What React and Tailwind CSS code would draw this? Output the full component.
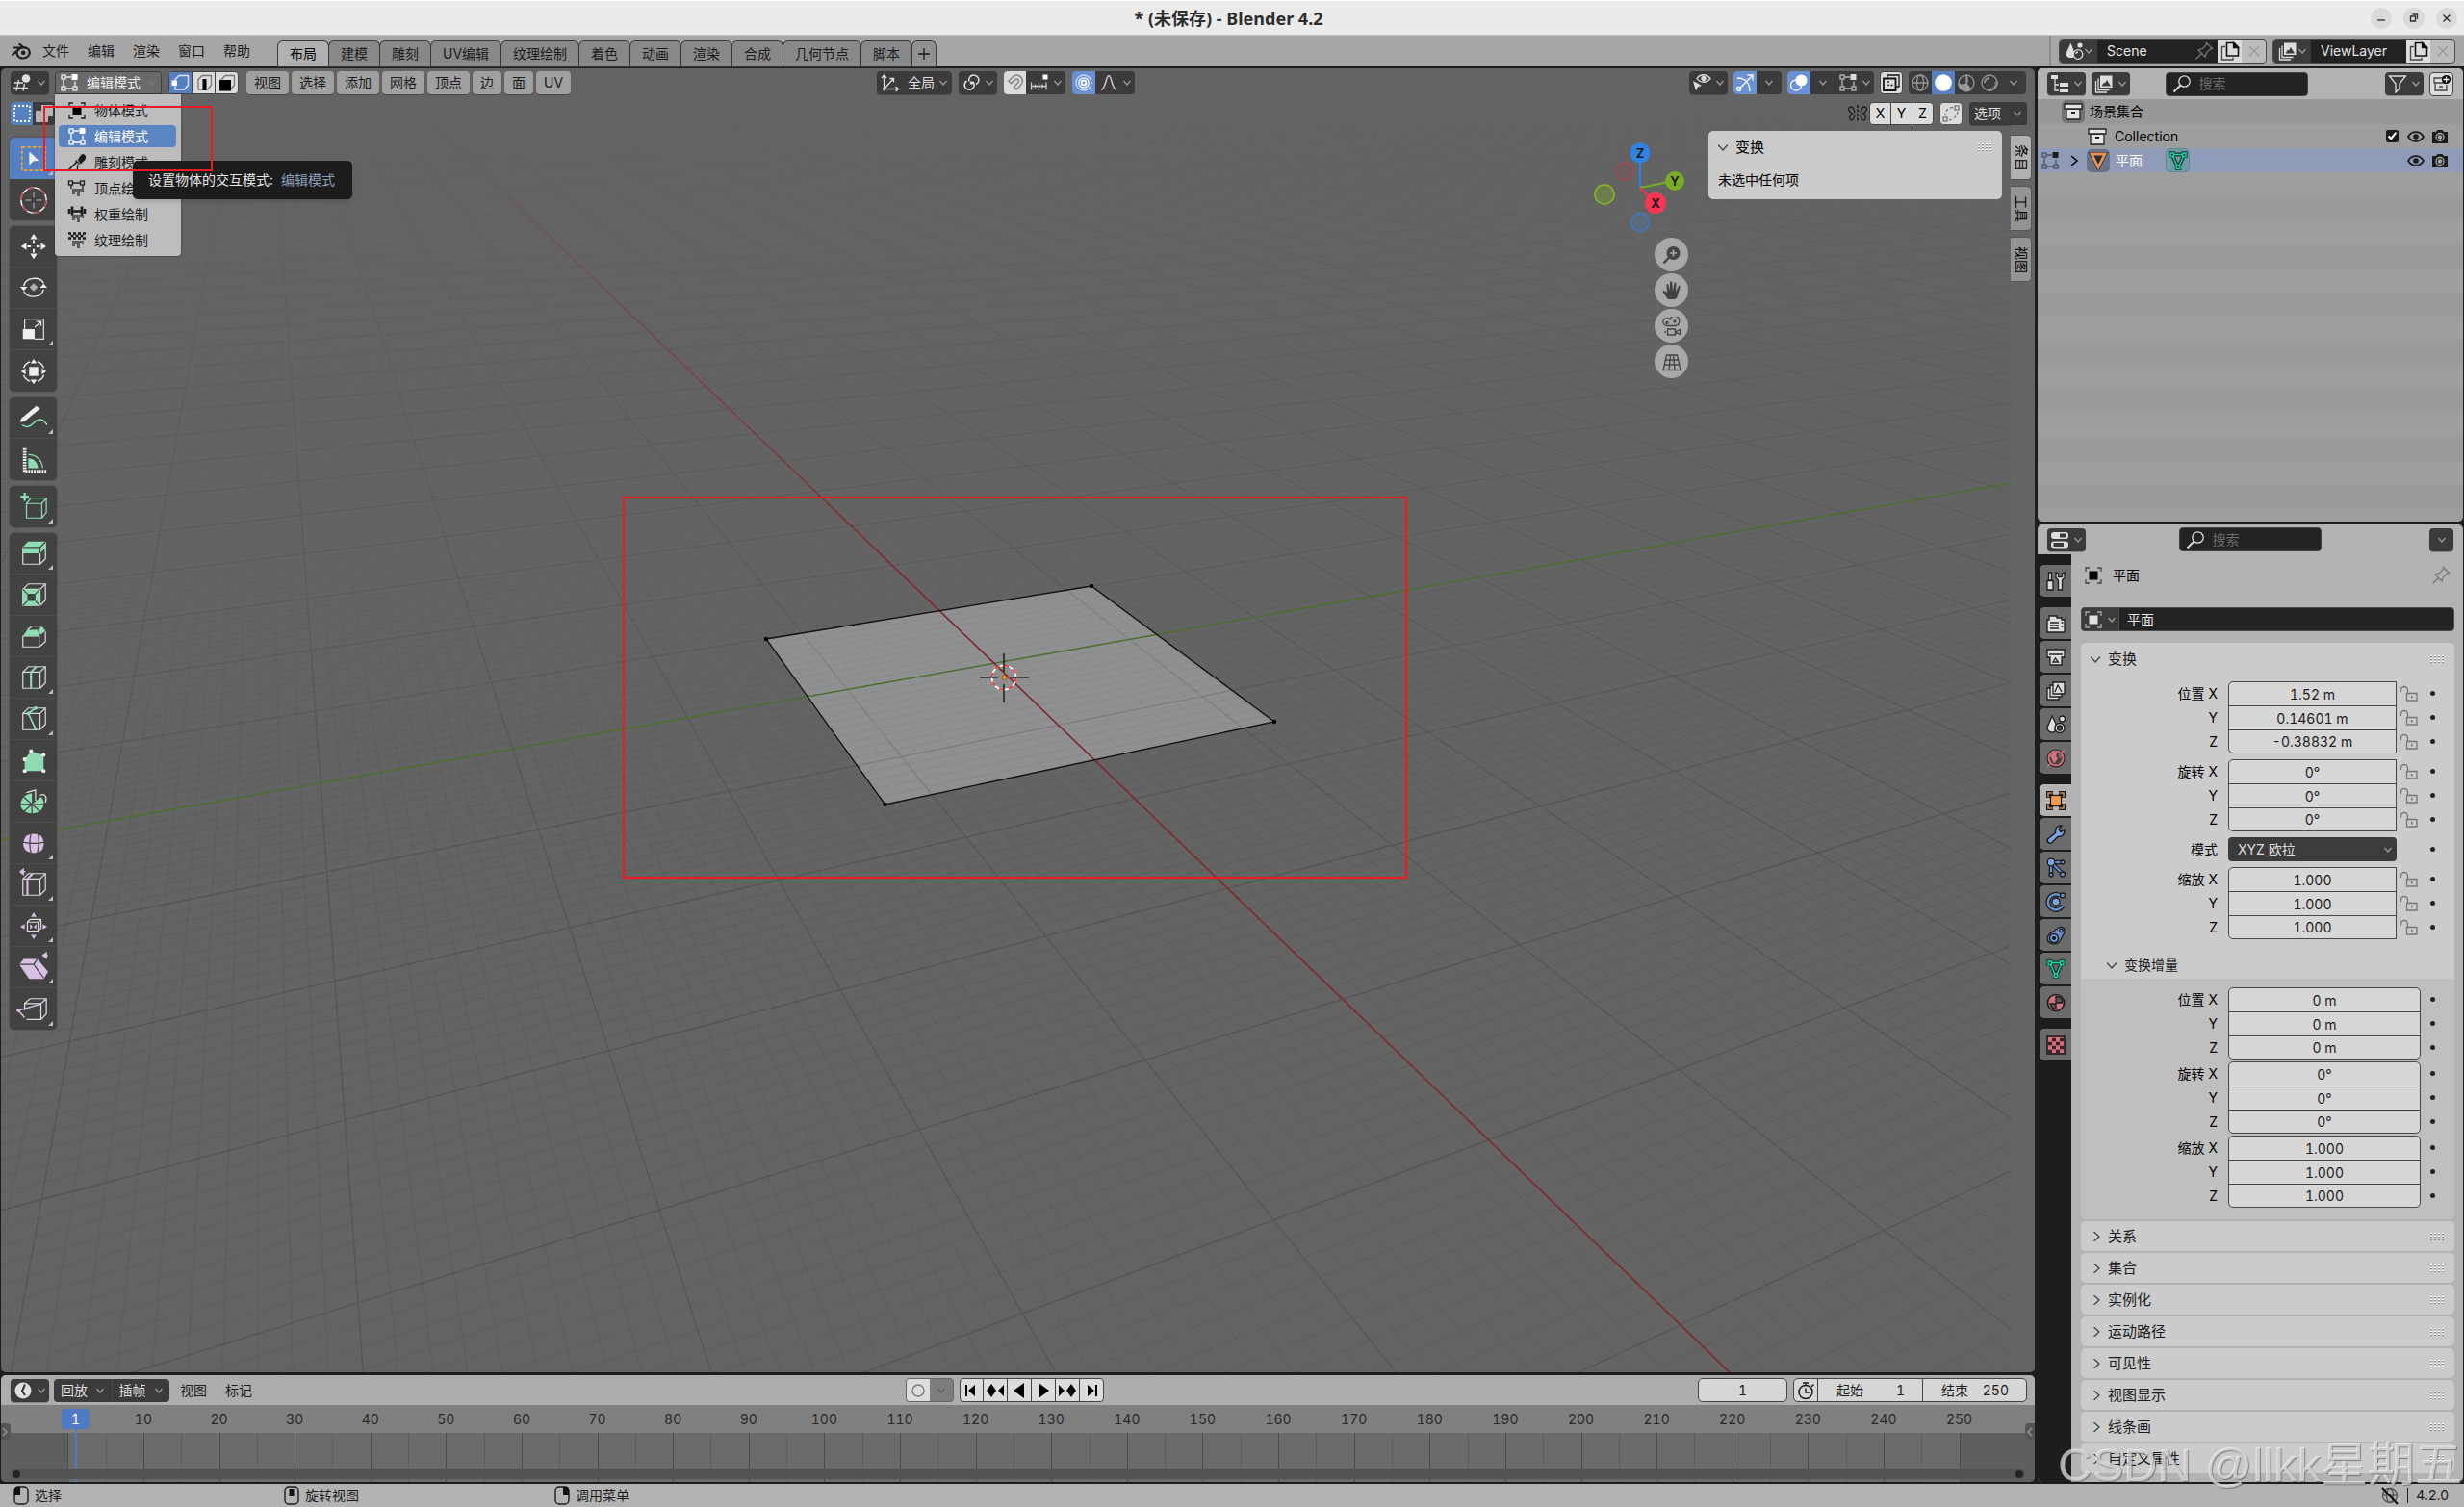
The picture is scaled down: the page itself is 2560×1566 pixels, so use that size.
import { useState } from 'react';

/* ---------- small shared pieces ---------- */

const Svg = ({ size = 'size-5', box = '0 0 20 20', className = '', children }) => (
  <svg viewBox={box} className={`${size} shrink-0 ${className}`} fill="none" stroke="currentColor" strokeWidth="1.3" aria-hidden="true">
    {children}
  </svg>
);

const Chevron = ({ className = 'text-[#9a9a9a]' }) => (
  <Svg size="size-2.5" box="0 0 10 10" className={className}>
    <path d="M1.5 3 5 7l3.5-4" />
  </Svg>
);

const Dark = ({ className = '', label, children }) => (
  <button type="button" aria-label={label} className={`flex h-6 items-center justify-center gap-1 rounded bg-[#3b3b3b] text-[#dedede] shadow-[0_1px_1px_rgba(0,0,0,0.25)] ${className}`}>
    {children}
  </button>
);

const Grip = () => (
  <svg viewBox="0 0 16 8" className="h-2 w-4 shrink-0" shapeRendering="crispEdges" aria-hidden="true">
    {[0, 4, 8, 12].map((x) => [0, 3, 6].map((y) => (
      <g key={`${x}-${y}`}>
        <rect x={x + 1} y={y} width="2" height="1" fill="#fff" />
        <rect x={x + 1} y={y + 1} width="2" height="1" fill="#8f8f8f" />
      </g>
    )))}
  </svg>
);

/* ---------- icons ---------- */

const EditModeIcon = ({ className, dot = '#fff' }) => (
  <Svg className={className}>
    <path d="M6.5 4H12M4 6.5v7M6.5 16h7M16 8.5v5" />
    <rect x="2" y="2" width="4" height="4" />
    <rect x="2" y="14" width="4" height="4" />
    <rect x="14" y="14" width="4" height="4" />
    <rect x="12.5" y="1" width="6" height="6" fill={dot} stroke="none" />
  </Svg>
);

const ObjectIcon = ({ className, fill = '#000' }) => (
  <Svg className={className}>
    <path d="M6 2H2v4M14 2h4v4M6 18H2v-4M14 18h4v-4" />
    <rect x="5.5" y="5.5" width="9" height="9" fill={fill} stroke="none" />
  </Svg>
);

const SculptIcon = () => (
  <Svg>
    <path d="M1.500 17.500 10 9" strokeWidth="1.600" />
    <path d="M8.500 7.500l4 4M10.500 12v5" />
    <path d="M11.500 7l3-4.500 2-1 2 2-.5 3-4 4z" fill="currentColor" />
  </Svg>
);

const Drip = () => <path d="M5 10h12v4h-2v-1h-2v5h-3v-4H8v2H5z" fill="#5c5c5c" stroke="none" />;

const VertexPaintIcon = () => (
  <Svg>
    <Drip />
    <path d="M5 4h8M4 6v4M16 6v4" />
    <rect x="1.5" y="2" width="4" height="4" />
    <rect x="13.5" y="2" width="4" height="4" />
  </Svg>
);

const WeightPaintIcon = () => (
  <Svg>
    <Drip />
    <path d="M6 6.5h8" strokeWidth="2.4" />
    <path d="M2 4v5M18 4v5M5 1.5v9M15 1.5v9" strokeWidth="2.6" />
  </Svg>
);

const TexturePaintIcon = () => (
  <Svg>
    <Drip />
    <path d="M1 2.500h3m2 0h3m2 0h3m2 0h3M3.500 5h3m2 0h3m2 0h3M1 7.500h3m2 0h3m2 0h3m2 0h3" strokeWidth="2.400" />
  </Svg>
);

const ImageStackIcon = ({ className }) => (
  <Svg className={className}>
    <path d="M1.500 7v12H13M4 4.500v12h11.500" />
    <path fillRule="evenodd" d="M6 1.500h12.500V14H6zM7.500 12.500h9.500L13 6l-2 3.500-1-1z" fill="currentColor" stroke="none" />
  </Svg>
);

const SceneIcon = ({ className }) => (
  <Svg className={className}>
    <path d="M6.500 1.500 10 11a6 6 0 0 0-.5 5.500C5 18 1 16 1.500 12.500z" fill="currentColor" stroke="none" />
    <circle cx="14" cy="13.500" r="4.800" />
    <path d="M12 13a2 2 0 0 1 2-2" />
    <circle cx="16" cy="4" r="2.600" fill="currentColor" stroke="none" />
  </Svg>
);

const CopyIcon = () => (
  <Svg>
    <path d="M5 5.500H1.500V19H13v-2.500" stroke="#444" />
    <path d="M6.500 1.500H14L18.500 6v9h-12z" stroke="#111" strokeWidth="1.600" />
    <path d="M13.500 1.500v5h5z" fill="#111" stroke="#111" />
  </Svg>
);

const CrossIcon = ({ className = 'text-[#999]' }) => (
  <Svg size="size-4" box="0 0 16 16" className={className}>
    <path d="M3 3l10 10M13 3 3 13" />
  </Svg>
);

const PinIcon = ({ className }) => (
  <Svg className={className}>
    <path d="M1.500 18.500 7.500 12.500M4 9l7 7 1.500-4.500 4-3.500 2-.5-6-6-.5 2.500L8.500 7.500z" />
  </Svg>
);

const SearchIcon = () => (
  <Svg>
    <circle cx="12.500" cy="7.500" r="5.700" />
    <path d="M8.500 11.500 1.500 18.500" strokeWidth="1.800" />
  </Svg>
);

const CollectionIcon = () => (
  <Svg>
    <path d="M3 7h14v11H3z" fill="#e4e4e4" stroke="#222" />
    <path d="M1 2h18v5H1z" fill="#e4e4e4" stroke="#222" />
    <path d="M8 11h4" stroke="#222" strokeWidth="2" />
  </Svg>
);

const EyeIcon = () => (
  <Svg className="text-[#1c1c1c]">
    <path d="M2 10c4-6.500 12-6.500 16 0-4 6.500-12 6.500-16 0z" strokeWidth="1.800" />
    <circle cx="10" cy="10" r="2.800" fill="currentColor" stroke="none" />
  </Svg>
);

const CameraIcon = () => (
  <Svg className="text-[#1c1c1c]">
    <path d="M2 5h4l1.500-2h5L14 5h4v12H2z" fill="currentColor" stroke="none" />
    <circle cx="10" cy="10.500" r="4" stroke="#a8a8a8" />
    <circle cx="10" cy="10.500" r="2.200" fill="#a8a8a8" stroke="none" />
  </Svg>
);

const LockIcon = () => (
  <Svg className="text-[#777]">
    <path d="M1.500 8V6a3.500 3.500 0 0 1 7 0v3.500" />
    <path d="M7.500 9.500h10.500v7.500H7.500z" />
    <path d="M12.800 12v2.500" strokeWidth="1.600" />
  </Svg>
);

const MeshIcon = ({ stroke = '#1fd5a5' }) => (
  <Svg>
    <path d="M3.500 3.500h13L10 17z" stroke="#16302b" strokeWidth="4" />
    <path d="M1 1h5v5H1zM14 1h5v5h-5zM7.500 14.500h5v5h-5z" fill="#16302b" stroke="#16302b" />
    <path d="M3.500 3.500h13L10 17z" stroke={stroke} strokeWidth="1.500" />
    <path d="M2 2h3.500v3.500H2zM14.500 2H18v3.500h-3.500zM8.200 15h3.600v3.500H8.200z" stroke={stroke} fill="#1c3a34" />
  </Svg>
);

/* ---------- title and menu bar ---------- */

const TitleBar = () => (
  <header className="flex h-9 shrink-0 items-center border-t border-white bg-[#ebebeb] pr-[7px]">
    <div className="flex-1" />
    <h1 className="font-['Noto_Sans','Noto_Sans_CJK_SC',sans-serif] text-lg font-bold text-[#2e2e2e]">* (未保存) - Blender 4.2</h1>
    <div className="flex flex-1 justify-end gap-3 text-[#2e2e2e]">
      {[
        ['最小化', 'M7 13h8'],
        ['还原', 'M7.500 9h5v5h-5zM9.500 7h5v5'],
        ['关闭', 'M7.500 7.500l7 7M14.500 7.500l-7 7'],
      ].map(([label, d]) => (
        <button key={label} type="button" aria-label={label} className="size-[22px] rounded-full bg-[#dadada]">
          <Svg size="size-[22px]" box="0 0 22 22"><path d={d} /></Svg>
        </button>
      ))}
    </div>
  </header>
);

const MENUS = ['文件', '编辑', '渲染', '窗口', '帮助'];
const WORKSPACES = ['布局', '建模', '雕刻', 'UV编辑', '纹理绘制', '着色', '动画', '渲染', '合成', '几何节点', '脚本'];

const DataBlock = ({ icon, name, width, pin }) => (
  <div className="flex h-[25px] overflow-hidden rounded border border-[#4a4a4a] bg-[#bcbcbc]">
    <button type="button" aria-label={`浏览 ${name}`} className="flex w-[39px] items-center justify-center bg-[#3b3b3b] text-[#dedede]">
      {icon}
      <Chevron />
    </button>
    <div className={`flex items-center bg-[#222] pr-1 ${width}`}>
      <input aria-label={name} defaultValue={name} className="min-w-0 flex-1 bg-transparent pl-2.5 text-[#e6e6e6] outline-none" />
      {pin && <PinIcon className="text-[#777]" />}
    </div>
    <button type="button" aria-label="新建" className="flex w-[25px] items-center justify-center bg-[#dcdcdc]"><CopyIcon /></button>
    <button type="button" aria-label="移除" className="flex w-[25px] items-center justify-center"><CrossIcon /></button>
  </div>
);

const MenuBar = () => (
  <div className="flex h-[33px] shrink-0 border-t border-[#c0c0c0] bg-[#a6a6a6]">
    <div className="flex w-11 items-center pl-3 text-[#1c1c1c]">
      <Svg>
        <path d="M2.500 6.500h10L8.500 3M1 14l8.500-7.500" strokeWidth="2.200" strokeLinecap="round" />
        <path d="M11.800 6c4.400.2 7 2.800 7 5.800s-3 5.700-6.800 5.700-6.200-2.500-6.500-5.200 2-5.500 6.300-6.300z" strokeWidth="2.200" />
        <circle cx="12.200" cy="11.800" r="2.300" fill="currentColor" stroke="none" />
      </Svg>
    </div>
    <nav className="flex items-center gap-[19px]">
      {MENUS.map((m) => <button key={m} type="button">{m}</button>)}
    </nav>
    <nav className="ml-[29px] flex items-end gap-px">
      {WORKSPACES.map((w, i) => (
        <button key={w} type="button" className={`h-[26px] rounded-t-[5px] px-3 shadow-[0_0_0_1px_#383838] ${i === 0 ? 'bg-[#b0b0b0] text-black' : 'bg-[#888]'}`}>{w}</button>
      ))}
      <button type="button" aria-label="添加工作区" className="flex h-[26px] w-6 items-center justify-center rounded-t-[5px] bg-[#909090] shadow-[0_0_0_1px_#383838]">
        <Svg size="size-3.5" box="0 0 14 14"><path d="M7 1v12M1 7h12" /></Svg>
      </button>
    </nav>
    <div className="ml-auto flex items-center gap-1.5 border-l-2 border-[#8c8c8c] pr-[9px] pl-2">
      <DataBlock icon={<SceneIcon />} name="Scene" width="w-[125px]" pin />
      <DataBlock icon={<ImageStackIcon />} name="ViewLayer" width="w-[99px]" />
    </div>
  </div>
);

/* ---------- 3D scene ---------- */

// ground plane -> screen projection
const project = (i, j) => {
  const w = 1 - 0.0807 * i + 0.0412 * j;
  return [((1033 - 21.9 * i + 188.7 * j) / w).toFixed(1), ((689.3 + 3.4 * i + 2.3 * j) / w).toFixed(1)].join(' ');
};

const gridPath = (i0, i1, j0, j1, step) => {
  const near = 0.25;
  let d = '';
  for (let n = Math.round(i0 / step); n <= i1 / step; n++) {
    const i = n * step;
    if (i === 0) continue;
    const from = Math.max(j0, (near - 1 + 0.0807 * i) / 0.0412);
    if (from < j1) d += `M${project(i, from)}L${project(i, j1)}`;
  }
  for (let n = Math.round(j0 / step); n <= j1 / step; n++) {
    const j = n * step;
    if (j === 0) continue;
    const to = Math.min(i1, (1 - near + 0.0412 * j) / 0.0807);
    if (to > i0) d += `M${project(i0, j)}L${project(to, j)}`;
  }
  return d;
};

const MINOR = gridPath(-16, 9, -8, 22, 0.1);
const MAJOR = gridPath(-50, 9, -30, 50, 1);

const Scene = () => (
  <svg viewBox="1 71 2113 1355" preserveAspectRatio="xMidYMid slice" className="absolute inset-0 size-full" aria-hidden="true">
    <defs>
      <linearGradient id="fadeMinor" gradientUnits="userSpaceOnUse" x1="0" y1="320" x2="0" y2="900">
        <stop offset="0" stopColor="#fff" stopOpacity="0" />
        <stop offset="0.6" stopColor="#fff" stopOpacity="0.55" />
        <stop offset="1" stopColor="#fff" />
      </linearGradient>
      <linearGradient id="fadeMajor" gradientUnits="userSpaceOnUse" x1="0" y1="110" x2="0" y2="900">
        <stop offset="0" stopColor="#fff" stopOpacity="0" />
        <stop offset="0.3" stopColor="#fff" stopOpacity="0.5" />
        <stop offset="1" stopColor="#fff" />
      </linearGradient>
      <linearGradient id="redAxis" gradientUnits="userSpaceOnUse" x1="0" y1="110" x2="0" y2="600">
        <stop offset="0" stopColor="#8a3038" stopOpacity="0" />
        <stop offset="1" stopColor="#82262d" />
      </linearGradient>
      <mask id="minor" maskUnits="userSpaceOnUse" x="0" y="0" width="2200" height="1500"><rect width="2200" height="1500" fill="url(#fadeMinor)" /></mask>
      <mask id="major" maskUnits="userSpaceOnUse" x="0" y="0" width="2200" height="1500"><rect width="2200" height="1500" fill="url(#fadeMajor)" /></mask>
    </defs>
    <path d="M796 664 1134 609 1324 750 919.500 836z" fill="#8e9092" />
    <g fill="none" stroke="#000">
      <path d={MINOR} strokeOpacity="0.07" mask="url(#minor)" />
      <path d={MAJOR} strokeOpacity="0.09" strokeWidth="1.500" mask="url(#major)" />
    </g>
    <path d="M-40 880 1033 689.300 2100 500" stroke="#4a6e2c" strokeWidth="1.500" fill="none" />
    <path d="M433 113 1033 689.300 1800 1429" stroke="url(#redAxis)" strokeWidth="1.600" fill="none" />
    <path d="M796 664 1134 609 1324 750 919.500 836z" fill="none" stroke="#111" strokeWidth="1.300" />
    {[[796, 664], [1134, 609], [1324, 750], [919.5, 836]].map(([x, y]) => <circle key={x} cx={x} cy={y} r="2.200" fill="#000" />)}
    <g fill="none">
      <circle cx="1043" cy="704" r="12.500" stroke="#fff" strokeWidth="1.600" />
      <circle cx="1043" cy="704" r="12.500" stroke="#f22" strokeWidth="1.600" strokeDasharray="4.900 4.900" />
      <path d="M1043 679v19M1043 711v19M1018 704h19M1050 704h19" stroke="#000" strokeWidth="1.200" />
      <circle cx="1043.500" cy="704" r="2.500" fill="#f79a32" stroke="#7a4a10" strokeWidth="0.800" />
    </g>
    <rect x="648" y="517" width="813" height="395" fill="none" stroke="#ed1c24" strokeWidth="2.200" />
  </svg>
);

/* ---------- viewport headers ---------- */

const VIEW_MENUS = ['视图', '选择', '添加', '网格', '顶点', '边', '面', 'UV'];
const MODES = [
  ['物体模式', <ObjectIcon />],
  ['编辑模式', <EditModeIcon />],
  ['雕刻模式', <SculptIcon />],
  ['顶点绘制', <VertexPaintIcon />],
  ['权重绘制', <WeightPaintIcon />],
  ['纹理绘制', <TexturePaintIcon />],
];

const ModeSelect = () => {
  const [mode, setMode] = useState('编辑模式');
  return (
    <div className="relative">
      <button type="button" aria-haspopup="listbox" className="flex h-6 w-[111px] items-center rounded-t border border-[#3f3f3f] bg-[#6a6a6a] pr-1 pl-1 text-[#efefef]">
        <EditModeIcon />
        <span className="ml-2 flex-1 text-left">{mode}</span>
        <Chevron className="text-[#7c7c7c]" />
      </button>
      <ul role="listbox" aria-label="模式" className="absolute top-6 left-0 z-20 flex w-[131px] flex-col gap-1 rounded-b bg-[#bdbdbd] px-1 py-[5px] shadow-[0_0_2px_rgba(0,0,0,0.6)]">
        {MODES.map(([name, icon]) => (
          <li key={name} role="option" aria-selected={name === mode}>
            <button type="button" onClick={() => setMode(name)} className={`flex h-[23px] w-[122px] items-center gap-2 rounded pl-[9px] ${name === mode ? 'bg-[#5b84c2] text-white' : 'text-[#1c1c1c]'}`}>
              {icon}
              {name}
            </button>
          </li>
        ))}
      </ul>
      <div role="tooltip" className="absolute top-[93px] left-[81px] z-30 flex h-10 w-[228px] items-center gap-2 rounded-[5px] bg-[#1c1c1c] pl-4 whitespace-nowrap text-[#e6e6e6] shadow-md">
        设置物体的交互模式: <span className="text-[#8f9dbb]">编辑模式</span>
      </div>
    </div>
  );
};

const HeaderRow = () => (
  <div className="flex h-[27px] items-end pr-[9px] pl-2.5">
    <div className="flex flex-1">
      <Dark label="编辑器类型" className="mr-1.5 w-10">
        <Svg>
          <path d="M1 10h9M0 15.500h15M5.500 7 3 18.500M11.500 11l-1.500 7.500" />
          <circle cx="13" cy="5.500" r="4.300" fill="currentColor" stroke="none" />
        </Svg>
        <Chevron />
      </Dark>
      <ModeSelect />
      <div className="ml-[7px] flex h-6 w-[73px] overflow-hidden rounded border border-[#444] bg-[#dcdcdc]">
        {['点', '边', '面'].map((m, i) => (
          <button key={m} type="button" aria-label={m} className={`flex flex-1 items-center justify-center ${i === 0 ? 'bg-[#5680c2] text-[#dfe8f8]' : 'border-l border-[#444] text-[#777]'}`}>
            <Svg>
              <path d="M4 6.500 8 2.500h9.500v10L13.500 17H4z" />
              {i === 0 && <rect x="0.500" y="7.500" width="5.500" height="5.500" fill="#fff" stroke="none" />}
              {i === 1 && <path d="M10.500 6v12" stroke="#000" strokeWidth="4" />}
              {i === 2 && <rect x="2" y="7" width="12" height="11.500" fill="#000" stroke="none" />}
            </Svg>
          </button>
        ))}
      </div>
      <nav className="ml-2 flex gap-[3px]">
        {VIEW_MENUS.map((m) => <button key={m} type="button" className="h-6 rounded bg-[#a0a0a0] px-2 text-[#1c1c1c] shadow-[0_1px_1px_rgba(0,0,0,0.3)]">{m}</button>)}
      </nav>
    </div>
    <div className="mr-[26px] flex gap-[7px]">
      <Dark className="w-[78px]">
        <Svg>
          <path d="M3.500 18.500v-16M1 5l2.500-3L6 5M2 16.500h16M15.500 14l3 2.500-3 2.500M4 16 13 6M9.500 5.500h4v4" />
        </Svg>
        <span className="ml-1">全局</span>
        <Chevron />
      </Dark>
      <Dark label="轴心点" className="w-10">
        <Svg>
          <path d="M8 8.500a5 5 0 1 1 7 3M12 9a5 5 0 1 1-6.500-1" strokeWidth="1.600" />
          <circle cx="10.500" cy="10" r="1.800" fill="currentColor" stroke="none" />
        </Svg>
        <Chevron />
      </Dark>
      <div className="flex h-6 w-16 overflow-hidden rounded bg-[#3b3b3b] text-[#ccc]">
        <button type="button" aria-label="吸附" className="flex w-[23px] items-center justify-center bg-[#dcdcdc] text-[#8a8a8a]">
          <Svg><path d="M3 8l4-4c3-3 7-2 9 .5s1.500 5.500-.5 8L11 17l-2.500-2.500 4-4.500c2.500-3-.5-5-3-3L5.500 10.500z" strokeWidth="1.700" /></Svg>
        </button>
        <button type="button" aria-label="吸附目标" className="flex flex-1 items-center justify-center gap-1">
          <Svg>
            <path d="M1 13.500h16M1.500 9.500v8M5.500 11.500v4M9.500 9.500v8M13 11.500v4M17 9.500v8" />
            <rect x="13.500" y="1.500" width="5" height="5" fill="#fff" stroke="none" />
          </Svg>
          <Chevron />
        </button>
      </div>
      <div className="flex h-6 w-[65px] overflow-hidden rounded bg-[#3b3b3b] text-[#ccc]">
        <button type="button" aria-label="衰减编辑" className="flex w-6 items-center justify-center bg-[#6a91d4] text-white">
          <Svg>
            <circle cx="10" cy="10" r="8" stroke="#cfdcf4" />
            <circle cx="10" cy="10" r="5.200" />
            <circle cx="10" cy="10" r="2.400" strokeWidth="2" />
          </Svg>
        </button>
        <button type="button" aria-label="衰减类型" className="flex flex-1 items-center justify-center gap-1">
          <Svg><path d="M2 17.500c5-1 5-15 8-15s3 14 8 15" strokeWidth="1.600" /></Svg>
          <Chevron />
        </button>
      </div>
    </div>
    <div className="flex flex-1 justify-end gap-1.5">
      <Dark label="可见性" className="w-10">
        <Svg>
          <path d="M5 5.500c3.500-5 10-5 14 0-4 5-10.500 5-14 0z" />
          <circle cx="12" cy="5.500" r="2" fill="currentColor" />
          <path d="M1 8l9 5-4 1.200L4 18.500z" fill="currentColor" stroke="none" />
        </Svg>
        <Chevron />
      </Dark>
      <div className="flex h-6 w-[50px] overflow-hidden rounded bg-[#3b3b3b]">
        <button type="button" aria-label="显示控件" className="flex w-6 items-center justify-center bg-[#6a91d4] text-white">
          <Svg><path d="M2 5c8 0 13 5 13 14M5 15.500 18 2M12.500 2H18v5.500" /><circle cx="3.500" cy="16.500" r="2" /></Svg>
        </button>
        <button type="button" aria-label="控件选项" className="flex flex-1 items-center justify-center"><Chevron /></button>
      </div>
      <div className="flex h-6 w-[90px] overflow-hidden rounded bg-[#3b3b3b] text-[#bbb]">
        <button type="button" aria-label="叠加层" className="flex w-6 items-center justify-center bg-[#6a91d4] text-white">
          <Svg><circle cx="12.500" cy="7.500" r="6" fill="currentColor" stroke="none" /><circle cx="7" cy="12.500" r="5.500" /></Svg>
        </button>
        <button type="button" aria-label="叠加层选项" className="flex w-[25px] items-center justify-center"><Chevron /></button>
        <button type="button" aria-label="网格叠加层" className="flex flex-1 items-center justify-center gap-1 border-l border-[#444]"><EditModeIcon dot="#ddd" /><Chevron /></button>
      </div>
      <button type="button" aria-label="透视模式" className="flex size-6 items-center justify-center rounded border border-[#444] bg-[#dcdcdc] text-[#111]">
        <Svg><path d="M6 5V2h12v12h-3" /><path d="M2 5.500h12.500V18H2z" strokeWidth="1.800" /><path d="M7 8v4.500h5" strokeDasharray="2 1.500" /></Svg>
      </button>
      <div className="flex h-6 w-[122px] overflow-hidden rounded bg-[#3b3b3b] text-[#999]">
        <button type="button" aria-label="线框" className="flex w-6 items-center justify-center">
          <Svg><circle cx="10" cy="10" r="8" /><ellipse cx="10" cy="10" rx="3.500" ry="8" /><path d="M2 10h16" /></Svg>
        </button>
        <button type="button" aria-label="实体" className="flex w-6 items-center justify-center bg-[#5680c2]">
          <Svg><circle cx="10" cy="10" r="8.800" fill="#fff" stroke="none" /></Svg>
        </button>
        <button type="button" aria-label="材质预览" className="flex w-6 items-center justify-center">
          <Svg><circle cx="10" cy="10" r="8" /><path d="M10 2v9l5 6A8 8 0 0 1 2 11c3 2 6 1 8 0 2-2 1-6 0-9z" fill="currentColor" /></Svg>
        </button>
        <button type="button" aria-label="渲染" className="flex w-6 items-center justify-center">
          <Svg><circle cx="10" cy="10" r="8" /><path d="M5 10a5 5 0 0 1 5-5" strokeWidth="2" /><path d="M17 9a7 7 0 0 1-9 8" strokeWidth="3" strokeDasharray="1.500 1" /></Svg>
        </button>
        <button type="button" aria-label="着色选项" className="flex flex-1 items-center justify-center"><Chevron /></button>
      </div>
    </div>
  </div>
);

const ToolSettingsRow = () => (
  <div className="mt-2 flex h-6 items-center pr-2 pl-2.5">
    <div className="flex h-6 overflow-hidden rounded bg-[#3b3b3b]">
      <button type="button" aria-label="设置选区" className="flex w-[23px] items-center justify-center bg-[#5680c2] text-white">
        <Svg><path d="M2 2h16v16H2z" strokeWidth="1.800" strokeDasharray="2 2" /></Svg>
      </button>
      <button type="button" aria-label="扩展选区" className="flex w-[23px] items-center justify-center text-[#b5b5b5]">
        <Svg><path d="M7 1h12v12h-5v6H1V7h6z" fill="currentColor" stroke="none" /></Svg>
      </button>
    </div>
    <div className="ml-auto flex items-center">
      <Svg className="mr-0.5 text-[#1c1c1c]">
        <path d="M10 1v18" strokeWidth="1.600" strokeDasharray="3 1.500" />
        <path d="M7 9C6 4 4 2 1.500 3.500S2 9 4.500 10C1 11 1 17 3.500 17S6.500 14 7 11M13 9c1-5 3-7 5.500-5.500S18 9 15.500 10c3.500 1 3.500 7 1 7S13.500 14 13 11" />
      </Svg>
      <div className="flex h-6 overflow-hidden rounded border border-[#444] bg-[#dcdcdc]">
        {['X', 'Y', 'Z'].map((a) => <button key={a} type="button" className="w-[22px] border-l border-[#444] text-black first:w-[21px] first:border-l-0">{a}</button>)}
      </div>
      <button type="button" aria-label="自动合并" className="ml-1.5 flex size-6 items-center justify-center rounded border border-[#555] bg-[#dcdcdc] text-[#777]">
        <Svg><rect x="14" y="2" width="4" height="4" /><rect x="2" y="14" width="4" height="4" /><path d="M12 3.500C7 4 4 7 3.500 12M8 17c5-1 8-4 9-9" strokeDasharray="3 2.500" /></Svg>
      </button>
      <Dark className="ml-[7px] w-[60px] gap-3">选项 <Chevron /></Dark>
    </div>
  </div>
);

/* ---------- toolbar ---------- */

const Cube = () => <path d="M4 10h19v18H4zM4 10l6-6h19l-6 6M29 4v18l-6 6" stroke="#d8d8d8" />;
const G = '#8fdcb4';
const P = '#d8bfe4';

const TOOL_GROUPS = [
  [
    ['框选', true, <><rect x="3" y="3" width="26" height="26" stroke="#e0a63d" strokeWidth="1.800" strokeDasharray="4 2" /><path d="M11 8l11 10-6 .5L11 23z" fill="#eee" stroke="none" /></>],
    ['游标', false, <><circle cx="16" cy="16" r="14" stroke="#f0f0f0" strokeWidth="1.600" /><circle cx="16" cy="16" r="14" stroke="#b0484c" strokeWidth="1.600" strokeDasharray="8 6.600" /><path d="M16 7v6M16 19v6M7 16h6M19 16h6" stroke="#999" strokeWidth="1.500" /></>],
  ],
  [
    ['移动', false, <><path d="M16 9v4M16 19v4M9 16h4M19 16h4" stroke="#eee" strokeWidth="2" /><path d="M16 2l4 6h-8zM16 30l4-6h-8zM2 16l6-4v8zM30 16l-6-4v8z" fill="#eee" stroke="none" /></>],
    ['旋转', false, <><path d="M5 14C7 4 23 3 27 11M27 18C24 28 9 28 5 20" stroke="#eee" strokeWidth="1.500" /><path d="M1 15h8l-4 4.500zM23 16l4-4.500 4 4.500z" fill="#eee" stroke="none" /><path d="M11.500 15.500l4.500-4.500 4.500 4.500L16 20z" fill="#b0b0b0" stroke="none" /></>],
    ['缩放', true, <><path d="M6 16V5h21v22H17" stroke="#ddd" /><rect x="4" y="16" width="13" height="11" fill="#eee" stroke="none" /><path d="M17 14l7-6M19 7.500h5v5" stroke="#eee" /></>],
    ['变换', false, <><ellipse cx="16" cy="16" rx="12" ry="11.500" stroke="#eee" strokeWidth="1.500" strokeDasharray="10 8.400" strokeDashoffset="-4" /><rect x="11" y="11" width="10" height="10" fill="#eee" stroke="none" /><path d="M16 2l3.500 5h-7zM16 30l3.500-5h-7zM2 16l5-3.500v7zM30 16l-5-3.500v7z" fill="#eee" stroke="none" /></>],
  ],
  [
    ['标注', true, <><path d="M2 17 19 3l4 3L6 20l-5 1z" fill="#eee" stroke="none" /><path d="M3 24c9 6 12-3 17-5s7 0 11 5" stroke={G} strokeWidth="1.600" /></>],
    ['测量', false, <><path d="M6 3v26h25" stroke="#eee" strokeWidth="4" strokeDasharray="2 1" /><path d="M10 25V14c6 0 10 4 11 11z" fill={G} stroke="none" /><path d="M10 10c9 0 15 6 16 15" stroke={G} /></>],
  ],
  [['添加立方体', true, <><path d="M8 12h17v16H8zM8 12l5-6h17l-5 6M30 6v16l-5 6" stroke={G} /><path d="M6 0v9M1.500 4.500h9" stroke={G} strokeWidth="2.500" /></>]],
  [
    ['挤出选区', true, <><Cube /><path d="M4 9l6-6h19v7l-6 6H4z" fill={G} stroke="none" /><path d="M4 9.500h19l6-6M23 9.500V16" stroke="#424242" /></>],
    ['内插面', false, <><Cube /><path fillRule="evenodd" d="M4 10h19v18H4zM9 15v8h9v-8z" fill={G} stroke="none" /><path d="M4 10l5 5M23 10l-5 5M4 28l5-5M23 28l-5-5" stroke="#424242" /></>],
    ['倒角', false, <><path d="M4 16h18v12H4zM29 11v11l-7 6" stroke="#d8d8d8" /><path d="M4 16l5-7h12l4-4 4 5-7 6z" fill={G} stroke="none" /><path d="M21 9l2 7" stroke="#424242" /><path d="M9 9l5-4h11" stroke="#d8d8d8" /></>],
    ['环切', true, <><Cube /><path d="M13 28V10l6-6" stroke={G} strokeWidth="2.200" /></>],
    ['切割', true, <><Cube /><path d="M18 4 10 10l8 17" stroke={G} strokeWidth="1.800" /><circle cx="18" cy="4" r="2" fill={G} stroke="none" /><circle cx="10" cy="10" r="2" fill={G} stroke="none" /><circle cx="18" cy="27" r="2" fill={G} stroke="none" /></>],
    ['多边形建形', false, <><path d="M6 15l7-9 14 4v18H6z" fill={G} stroke="none" />{[[6, 15], [13, 6], [27, 10], [27, 28], [6, 28]].map(([x, y]) => <circle key={`${x}${y}`} cx={x} cy={y} r="2.200" fill="#eee" stroke="none" />)}</>],
    ['旋绕', false, <><path d="M14 7v12l10-8c4 3 5 12-2 16-7 4-15 2-19-3C-1 17 5 7 14 7z" fill={G} stroke="none" /><path d="M14 19v11M14 19H1M14 19l-9-8M14 19l-9 8M14 19l9 8M14 19h13" stroke="#424242" /><path d="M8 6l10-3v12M23 9c6-3 8 3 6 8" stroke="#ddd" /></>],
    ['光滑', true, <><path d="M8 8c5-3 11-3 16 0 4 5 4 11 1 16-5 4-13 4-18 0-4-5-3-11 1-16z" fill={P} stroke="none" /><path d="M13 6c-2 7-2 13 0 21M21 6c1 7 1 13-1 21M4 15c8 2 16 2 24 0" stroke="#424242" /></>],
    ['滑移边线', true, <><Cube /><path d="M9 28V10l6-6" stroke={P} strokeWidth="2.200" /><path d="M1 2l3.500-3v6zM4 2h3" fill={P} stroke={P} /></>],
    ['法向缩放', true, <><path d="M9 12h12v10H9zM9 12l3-3h12v10l-3 3M21 12l3-3" stroke="#ddd" /><path d="M16 1l3 5h-6zM16 31l3-5h-6zM1 17l5-3v6zM31 17l-5-3v6zM12 14l3 3-3 3zM19 14l-3 3 3 3z" fill={P} stroke="none" /></>],
    ['切变', true, <><path d="M0 13l5-6h15l12 14-5 8H11z" fill={P} stroke="none" /><path d="M0 13h16l11 15M16 13l4-6" stroke="#424242" /><path d="M26 3l4-3v6zM29 3h3" fill={P} stroke={P} /></>],
    ['断离区域', true, <><path d="M6 17V9l6-5h18v17l-6 6H8M6 9.500h18v17M24 9.500 30 4" stroke="#ddd" /><path d="M-1 17l25-7M-1 17l7 8" stroke={P} strokeWidth="1.600" /><circle cx="-1" cy="17" r="2" fill={P} stroke="none" /></>],
  ],
];

const Toolbar = () => (
  <div className="mt-[13px] flex w-[49px] flex-col gap-1.5">
    {TOOL_GROUPS.map((group, g) => (
      <div key={g} className="overflow-hidden rounded-[5px] bg-[#424242] shadow-[0_0_2px_rgba(0,0,0,0.4)]">
        {group.map(([name, more, icon], i) => (
          <button key={name} type="button" aria-label={name} className={`relative flex h-[43px] w-full items-center justify-center ${g === 0 && i === 0 ? 'bg-[#5680c2]' : 'border-b border-[#4e4e4e] last:border-b-0'}`}>
            <Svg size="size-[30px]" box="0 0 32 32" className="overflow-visible">{icon}</Svg>
            {more && <svg viewBox="0 0 5 5" className="absolute right-1 bottom-1 size-[5px]" fill="#bbb"><path d="M5 0v5H0z" /></svg>}
          </button>
        ))}
      </div>
    ))}
  </div>
);

/* ---------- viewport right side ---------- */

const Gizmo = () => (
  <svg viewBox="1653 146 100 100" className="size-[100px] font-bold" aria-label="视图轴">
    <circle cx="1687" cy="179" r="9" fill="#8a3a4433" stroke="#b04553" strokeWidth="1.300" />
    <circle cx="1703" cy="232" r="9.500" fill="#4a78b055" stroke="#3d7cc9" strokeWidth="1.300" />
    <circle cx="1666" cy="203" r="10" fill="#6f8f3a99" stroke="#86bb1f" strokeWidth="1.500" />
    <path d="M1703 196v-30" stroke="#2f83e3" strokeWidth="2.200" />
    <path d="M1703 196l30-6" stroke="#7aac22" strokeWidth="2.200" />
    <path d="M1703 196l14 14" stroke="#f23550" strokeWidth="2.200" />
    <circle cx="1703" cy="160" r="10.500" fill="#2f83e3" />
    <circle cx="1739" cy="189" r="10" fill="#7aac22" />
    <circle cx="1719" cy="212" r="11" fill="#fb3653" />
    <g fill="#1a1a1a" fontSize="13" textAnchor="middle">
      <text x="1703" y="165">Z</text>
      <text x="1739" y="194">Y</text>
      <text x="1719" y="217">X</text>
    </g>
  </svg>
);

const NAV = [
  ['缩放', <><circle cx="11.500" cy="8" r="7" fill="currentColor" stroke="none" /><path d="M7 12.500 1.500 18.500" strokeWidth="2.500" /><path d="M11.500 4.500v7M8 8h7" stroke="#aaa" strokeWidth="1.600" /></>],
  ['平移', <path d="M6 19C3 15 1 12 .5 10.500c1-1 2.500-.5 4.500 2L4.500 3.500c1-1 2-.5 2 .5l1.500 6V1c.5-1 2-1 2.200 0L11 10l1.500-8c.5-1 2-.7 2 .5L14 11l3-6c1-.8 2-.2 1.700 1L16 15c-.5 3-2 4-4 4z" fill="currentColor" stroke="none" />],
  ['摄像机视角', <><path d="M5 9.500a4 4 0 1 1 3-6.500 5 5 0 1 1 5 6.500zM5.500 13h8v6h-8zM13.500 16l5-2.500v5zM3 15v2" /><circle cx="5" cy="6.500" r="1" /><circle cx="13" cy="5" r="1" /></>],
  ['透视/正交', <path d="M4.500 3h11L19 18.500H1zM3.500 8h13M2.500 13h15M8.500 3 7 18.500M11.500 3 13 18.500" />],
];

const Viewport = () => (
  <section className="relative flex min-h-0 flex-1 flex-col overflow-hidden rounded-[5px] bg-[#646464]" aria-label="3D 视图">
    <Scene />
    <div className="relative z-10"><HeaderRow /></div>
    <div className="relative"><ToolSettingsRow /></div>
    <div className="relative flex min-h-0 flex-1 pl-[9px]">
      <Toolbar />
      <div className="mt-[15px] mr-[21px] ml-auto flex flex-col items-end gap-[2px]">
        <Gizmo />
        {NAV.map(([label, icon]) => (
          <button key={label} type="button" aria-label={label} className="flex size-[35px] items-center justify-center rounded-full bg-[#a8a8a8] text-[#444]">
            <Svg>{icon}</Svg>
          </button>
        ))}
      </div>
      <div className="mt-1.5 mr-[9px] h-[71px] w-[305px] rounded-[5px] bg-[#cbcbcb] px-2.5 text-black">
        <div className="flex h-[33px] items-center gap-2">
          <Svg size="size-2.5" box="0 0 10 10" className="text-[#444]"><path d="M0 2.500 5 8l5-5.500" /></Svg>
          <span className="flex-1 text-[15px]">变换</span>
          <Grip />
        </div>
        <div className="flex h-9 items-center">未选中任何项</div>
      </div>
      <div className="flex w-[25px] flex-col gap-1.5 bg-[#656565] pt-2.5">
        {['条目', '工具', '视图'].map((t, i) => (
          <button key={t} type="button" className={`h-[47px] w-[22px] rounded-r-[5px] border border-l-0 border-[#555] leading-5 text-black [text-orientation:sideways] [writing-mode:vertical-rl] ${i === 0 ? 'bg-[#b0b0b0]' : 'bg-[#949494]'}`}>{t}</button>
        ))}
      </div>
    </div>
    <div className="pointer-events-none absolute top-[39px] left-11 z-40 h-[68px] w-[176px] border-2 border-[#ed1c24]" />
  </section>
);

/* ---------- timeline ---------- */

const PLAY = [
  ['跳到首帧', 'M4 4h2v12H4zM14 4v12L7 10z'],
  ['上一关键帧', 'M6 3l5 7-5 7-5-7zM19 4v12l-6-6z'],
  ['倒放', 'M15 2v16L4 10z'],
  ['播放', 'M5 2v16l11-8z'],
  ['下一关键帧', 'M14 3l5 7-5 7-5-7zM1 4v12l6-6z'],
  ['跳到末帧', 'M14 4h2v12h-2zM6 4v12l7-6z'],
];

const Timeline = () => (
  <section className="relative flex h-[111px] shrink-0 flex-col overflow-hidden rounded-[5px] bg-[#6b6b6b] tabular-nums" aria-label="时间线">
    <div className="flex h-[31px] items-center bg-[#adadad] pr-2 pl-2.5">
      <div className="flex flex-1 items-center">
        <Dark label="编辑器类型" className="mr-[5px] w-10">
          <Svg><circle cx="10" cy="10" r="8.500" fill="currentColor" stroke="none" /><path d="M12 3.500 9 10.500l3 4.500" stroke="#333" strokeWidth="2" /></Svg>
          <Chevron />
        </Dark>
        <div className="flex h-6 overflow-hidden rounded bg-[#3b3b3b] text-[#dedede]">
          <button type="button" className="flex w-[60px] items-center justify-center gap-2">回放 <Chevron /></button>
          <button type="button" className="flex w-[60px] items-center justify-center gap-2 border-l border-[#4a4a4a]">插帧 <Chevron /></button>
        </div>
        <button type="button" className="ml-[11px]">视图</button>
        <button type="button" className="ml-[19px]">标记</button>
      </div>
      <div className="mr-[30px] flex gap-1.5">
        <div className="flex h-[25px] w-[50px] overflow-hidden rounded border border-[#666] bg-[#7d7d7d]">
          <button type="button" aria-label="自动插帧" className="flex w-6 items-center justify-center bg-[#dcdcdc] text-[#777]"><Svg><circle cx="10" cy="10" r="6" /></Svg></button>
          <button type="button" aria-label="自动插帧选项" className="flex flex-1 items-center justify-center"><Chevron className="text-[#5c5c5c]" /></button>
        </div>
        <div className="flex h-[25px] w-[150px] overflow-hidden rounded border border-[#444] bg-[#dcdcdc]">
          {PLAY.map(([label, d]) => (
            <button key={label} type="button" aria-label={label} className="flex flex-1 items-center justify-center border-l border-[#444] first:border-l-0">
              <Svg><path d={d} fill="#000" stroke="none" /></Svg>
            </button>
          ))}
        </div>
      </div>
      <div className="flex flex-1 justify-end gap-1.5">
        <input aria-label="当前帧" defaultValue="1" className="h-[25px] w-[93px] rounded-[5px] border border-[#444] bg-[#d6d6d6] text-center" />
        <div className="flex h-[25px] w-[243px] overflow-hidden rounded-[5px] border border-[#444] bg-[#d6d6d6]">
          <button type="button" aria-label="预览范围" className="flex w-6 items-center justify-center">
            <Svg><circle cx="10" cy="11.500" r="7" strokeWidth="1.500" /><path d="M10 7.500v4.500h4M10 4.500V2M7 2h6M16 6l2.500-2.500" strokeWidth="1.500" /></Svg>
          </button>
          <label className="flex w-[109px] items-center border-l border-[#444] pr-[18px] pl-[19px]">
            起始 <input defaultValue="1" className="w-0 flex-1 bg-transparent text-right" />
          </label>
          <label className="flex flex-1 items-center border-l border-[#444] pr-[18px] pl-[19px]">
            结束 <input defaultValue="250" className="w-0 flex-1 bg-transparent text-right" />
          </label>
        </div>
      </div>
    </div>
    <div className="relative flex min-h-0 flex-1">
      <div className="flex w-[30px] flex-col bg-[#5f5f5f]">
        <div className="h-[29px] bg-[#808080]" />
      </div>
      {Array.from({ length: 26 }, (_, n) => (
        <div key={n} className="flex min-w-0 flex-1 flex-col">
          <div className="flex h-[29px] items-center justify-center bg-[#808080] text-[#2a2a2a]">{n > 0 && n * 10}</div>
          <div className="flex flex-1">
            <div className={`flex-1 border-l border-[#5d5d5d] ${n === 0 ? 'bg-[#5f5f5f]' : ''}`} />
            <div className={`flex-1 border-l border-[#4c4c4c] ${n === 25 ? 'bg-[#5f5f5f]' : ''}`} />
          </div>
        </div>
      ))}
      <div className="flex w-[39px] flex-col bg-[#5f5f5f]">
        <div className="h-[29px] bg-[#808080]" />
      </div>
      <div className="absolute top-5 left-[77px] h-[60px] w-0.5 bg-[#4f7ac4]" />
      <div className="absolute top-1 left-[63px] flex h-[21px] w-[29px] items-center justify-center rounded bg-[#4f7ac4] text-white">1</div>
      <div className="absolute inset-x-2.5 bottom-[3px] flex h-[11px] items-center justify-between rounded-full bg-[#545454] px-0.5">
        <span className="size-2 rounded-full bg-[#232323]" />
        <span className="size-2 rounded-full bg-[#232323]" />
      </div>
      <button type="button" aria-label="展开左侧" className="absolute top-[19px] left-0 flex h-[17px] w-2.5 items-center rounded-r bg-[#555] text-[#999]"><Svg size="size-2.5" box="0 0 10 10"><path d="M2 1l4 4-4 4" /></Svg></button>
      <button type="button" aria-label="展开右侧" className="absolute top-[19px] right-0 flex h-[17px] w-2.5 items-center rounded-l bg-[#555] text-[#999]"><Svg size="size-2.5" box="0 0 10 10"><path d="M7 1 3 5l4 4" /></Svg></button>
    </div>
  </section>
);

/* ---------- outliner ---------- */

const SearchBox = ({ id }) => (
  <label htmlFor={id} className="flex h-[25px] w-[148px] items-center gap-2 rounded border border-[#444] bg-[#232323] pl-1.5 text-[#dedede]">
    <SearchIcon />
    <input id={id} type="search" aria-label="搜索" placeholder="搜索" className="w-0 flex-1 bg-transparent placeholder:text-[#6b6b6b]" />
  </label>
);

const Outliner = () => (
  <section className="flex h-[471px] shrink-0 flex-col overflow-hidden rounded-[5px] bg-[#9e9e9e]" aria-label="大纲视图">
    <div className="flex h-8 shrink-0 items-center bg-[#b3b3b3] pr-2.5 pl-2.5">
      <Dark label="编辑器类型" className="mr-1.5 w-10">
        <Svg><path d="M5 5v12h4M5 11h4" /><path d="M1 1h7v4H1zM10 9h9v4h-9zM10 15h9v4h-9z" fill="currentColor" stroke="none" /></Svg>
        <Chevron />
      </Dark>
      <Dark label="显示模式" className="w-10"><ImageStackIcon /><Chevron /></Dark>
      <div className="flex flex-1 justify-center pr-11"><SearchBox id="outliner-search" /></div>
      <Dark label="过滤" className="mr-1.5 w-10">
        <Svg><path d="M1.500 2h17L12 10v5l-4 4v-9z" /></Svg>
        <Chevron />
      </Dark>
      <button type="button" aria-label="新建集合" className="flex size-[25px] items-center justify-center rounded border border-[#444] bg-[#dcdcdc] text-[#444]">
        <Svg><path d="M11 4H2v5h13M3 9v8h12V11M7 13h4" /><circle cx="14.500" cy="5.500" r="4.500" fill="#000" stroke="none" /><path d="M14.500 2.500v6M11.500 5.500h6" stroke="#fff" /></Svg>
      </button>
    </div>
    <div className="min-h-0 flex-1 overflow-hidden text-black">
      <div className="flex h-[26px] items-center bg-[#989898] pl-[25px]">
        <span className="mr-[5px] flex size-6 items-center justify-center rounded-[5px] bg-[#727272]"><CollectionIcon /></span>
        场景集合
      </div>
      <div className="flex h-[25px] items-center pr-3.5 pl-[52px]">
        <CollectionIcon />
        <span className="ml-2 flex-1">Collection</span>
        <input type="checkbox" aria-label="启用 Collection" defaultChecked className="mr-2 size-[13px] accent-[#1c1c1c]" />
        <button type="button" aria-label="隐藏" className="mr-[5px]"><EyeIcon /></button>
        <button type="button" aria-label="禁用渲染"><CameraIcon /></button>
      </div>
      <div className="flex h-[25px] items-center bg-[#8f9bb7] pr-3.5 pl-[3px] text-white">
        <EditModeIcon className="text-[#4d5364]" dot="#1c1c1c" />
        <Svg size="size-3" box="0 0 12 12" className="mr-[7px] ml-[9px] text-black"><path d="M3 1l6 5-6 5" strokeWidth="1.600" /></Svg>
        <span className="mr-1.5 flex size-6 items-center justify-center rounded-[5px] bg-[#6a7286]">
          <Svg><path d="M3 3h14l-7 14z" stroke="#1c1c1c" strokeWidth="4" /><path d="M3 3h14l-7 14z" fill="#2a2a2a" stroke="#e0935a" strokeWidth="2.800" /></Svg>
        </span>
        平面
        <span className="ml-6 flex size-[25px] items-center justify-center rounded-[5px] border border-[#5f8a92] bg-[#7299a4]"><MeshIcon /></span>
        <button type="button" aria-label="隐藏 平面" className="mr-[5px] ml-auto"><EyeIcon /></button>
        <button type="button" aria-label="禁用渲染 平面"><CameraIcon /></button>
      </div>
      {Array.from({ length: 15 }, (_, n) => <div key={n} className={`h-[25px] ${n % 2 ? 'bg-[#9a9a9a]' : ''}`} />)}
    </div>
  </section>
);

/* ---------- properties editor ---------- */

const PROP_TABS = [
  [['工具', <><path d="M2.500 1h3v8h-3zM1 9.500h6v9.500H1zM10 1v5.500l2.500 2.500v10h4V9L19 6.500V1l-2.500 1v3.500h-4V2z" fill="#dcdcdc" stroke="#1c1c1c" /></>]],
  [
    ['渲染', <><path d="M1 6h2V2h8v2h5v2h3v13H1z" fill="#dcdcdc" stroke="#1c1c1c" /><path d="M4 9h9M4 12h9M4 15h9M15.500 9h2M15.500 13h2" stroke="#222" /></>],
    ['输出', <><path d="M1 2h18v8h-3v8H4v-8H1z" fill="#dcdcdc" stroke="#1c1c1c" /><path d="M3 7h14M7 15l2.500-4 3 4z" stroke="#222" /></>],
    ['视图层', <><path d="M1 7v12h12v-3h3v-3h3V1H7v3H4v3z" fill="#dcdcdc" stroke="#1c1c1c" /><path d="M4 7v9h9M7 4v9h9M9 11l3-7 4 7" stroke="#222" /></>],
    ['场景', <><path d="M6 1 1 13c0 5 6 6 8 4l1-8z" fill="#dcdcdc" stroke="#1c1c1c" /><circle cx="14" cy="13.500" r="5" fill="#dcdcdc" stroke="#1c1c1c" /><circle cx="14" cy="13.500" r="2.500" fill="#555" stroke="#1c1c1c" /><circle cx="16.500" cy="4" r="3" fill="#dcdcdc" stroke="#1c1c1c" /></>],
    ['世界', <><circle cx="10" cy="10" r="8" fill="#444" stroke="#1c1c1c" strokeWidth="3" /><circle cx="10" cy="10" r="7.500" stroke="#d4717c" strokeWidth="2" /><path d="M4 8c2-4 5-4 7-4l-1 4 2 2-3 5c-3 0-2-4-5-7zM13 5l3 3-2 2z" fill="#d4717c" stroke="none" /><path d="M1 19l3-3M19 1l-3 3" stroke="#d4717c" /></>],
  ],
  [
    ['物体', <><path d="M7 2H2v5M13 2h5v5M7 18H2v-5M13 18h5v-5" stroke="#1c1c1c" strokeWidth="4" /><path d="M6.500 2H2v4.500M13.500 2H18v4.500M6.500 18H2v-4.500M13.500 18H18v-4.500" stroke="#c98b54" strokeWidth="1.600" /><rect x="4.500" y="4.500" width="11" height="11" fill="#f09a52" stroke="#1c1c1c" /></>],
    ['修改器', <path d="M1.500 15l8-6.500c-1-4.500 2-8 6.500-7.500l-3 4 2 2.500 4-2.500c.5 5-3 8-7 7.500l-6 6c-3 2-6-1-4.500-3.500z" fill="#7aa5e0" stroke="#1c1c1c" strokeWidth="1.500" />],
    ['粒子', <><path d="M5 4h12M5 4v13M5 4l12 12" stroke="#1c1c1c" strokeWidth="4.500" /><path d="M5 4h12M5 4v13M5 4l12 12" stroke="#6a90cc" strokeWidth="2" /><circle cx="5" cy="4" r="3.800" fill="#7aa5e0" stroke="#1c1c1c" /><circle cx="17" cy="4" r="2" fill="#6a90cc" stroke="#1c1c1c" /><circle cx="5" cy="17" r="2" fill="#6a90cc" stroke="#1c1c1c" /><circle cx="17" cy="16.500" r="2.500" fill="#6a90cc" stroke="#1c1c1c" /></>],
    ['物理', <><path d="M14 3.500A8 8 0 1 0 17 14" stroke="#1c1c1c" strokeWidth="5" /><path d="M14 3.500A8 8 0 1 0 17 14" stroke="#6a90cc" strokeWidth="2.500" /><circle cx="10" cy="10" r="4" fill="#7aa5e0" stroke="#1c1c1c" /><circle cx="17" cy="3.500" r="2.500" fill="#6a90cc" stroke="#1c1c1c" /></>],
    ['约束', <><path d="M3 9 13 2c4-2 7 1 6 5l-5 9c-3 5-12 3-13-2 0-2 1-4 2-5z" fill="#6a90cc" stroke="#1c1c1c" /><circle cx="8" cy="13" r="4.500" fill="#7aa5e0" stroke="#1c1c1c" strokeWidth="1.600" /><circle cx="8" cy="13" r="1.500" fill="#1c1c1c" /><circle cx="15.500" cy="5" r="1.800" stroke="#1c1c1c" /></>],
    ['数据', null],
    ['材质', <><circle cx="10" cy="10" r="8.500" fill="#d4717c" stroke="#1c1c1c" strokeWidth="1.600" /><path d="M10 3.500c5 0 7 3 6.500 6.500H10zM4 11h6v5.500c-3 0-5-2-6-5.500z" fill="#555" stroke="#1c1c1c" /></>],
  ],
  [['纹理', <><rect x="1" y="1" width="18" height="18" fill="#d4717c" stroke="#1c1c1c" strokeWidth="1.600" /><path d="M6 4.500h4m4 0h4M2 8.500h4m4 0h4M6 12.500h4m4 0h4M2 16.500h4m4 0h4" stroke="#3a2226" strokeWidth="3.500" /></>]],
];

const Row = ({ label, children, lock }) => (
  <div className="flex h-[25px] items-center">
    <span className="w-[142px] text-right text-black">{label}</span>
    <div className={`ml-[11px] h-full ${lock === undefined ? 'w-[200px]' : 'w-[175px]'}`}>{children}</div>
    {lock !== undefined && <button type="button" aria-label="锁定" className="ml-[3px] flex w-[22px]">{lock && <LockIcon />}</button>}
    <span className="ml-2.5 size-[5px] rounded-full bg-[#222]" />
  </div>
);

const Vector = ({ name, values, lock, round }) => (
  <div>
    {values.map((v, i) => (
      <Row key={i} label={i === 0 ? `${name} X` : 'YZ'[i - 1]} lock={lock}>
        <input
          aria-label={`${name} ${'XYZ'[i]}`}
          defaultValue={v}
          className={`block w-full border border-[#474747] bg-[#d6d6d6] text-center text-[#1c1c1c] tabular-nums ${i === 2 ? 'h-[25px]' : 'h-[26px]'} ${i === 0 ? 'rounded-tl-[5px]' : ''} ${i === 2 ? 'rounded-bl-[5px]' : ''} ${round && i === 0 ? 'rounded-tr-[5px]' : ''} ${round && i === 2 ? 'rounded-br-[5px]' : ''}`}
        />
      </Row>
    ))}
  </div>
);

const PANELS = ['关系', '集合', '实例化', '运动路径', '可见性', '视图显示', '线条画', '自定义属性'];

const Properties = () => (
  <section className="flex min-h-0 flex-1 flex-col overflow-hidden rounded-[5px] bg-[#b3b3b3]" aria-label="属性">
    <div className="flex h-[31px] shrink-0 items-center px-2.5">
      <Dark label="编辑器类型" className="w-10">
        <Svg>
          <rect x="1" y="2" width="18" height="7" rx="3" fill="currentColor" stroke="none" />
          <rect x="1" y="11.500" width="18" height="7" rx="3" fill="currentColor" stroke="none" />
          <path d="M10 3.500h6.500v4H10zM3.500 13H14v4H3.500z" fill="#3b3b3b" stroke="none" />
        </Svg>
        <Chevron />
      </Dark>
      <div className="flex flex-1 justify-center pr-4"><SearchBox id="prop-search" /></div>
      <Dark label="选项" className="w-[25px]"><Chevron /></Dark>
    </div>
    <div className="flex min-h-0 flex-1">
      <nav className="flex w-[35px] shrink-0 flex-col gap-[11px] bg-[#1d1d1d] pt-[11px] pl-0.5">
        {PROP_TABS.map((group, g) => (
          <div key={g} className="flex flex-col gap-0.5">
            {group.map(([name, icon]) => (
              <button key={name} type="button" aria-label={name} className={`flex h-[33px] items-center justify-center rounded-l-[5px] ${name === '物体' ? 'bg-[#b3b3b3]' : 'bg-[#6b6b6b]'}`}>
                {icon ? <Svg className="overflow-visible">{icon}</Svg> : <MeshIcon />}
              </button>
            ))}
          </div>
        ))}
      </nav>
      <div className="min-w-0 flex-1 overflow-hidden pr-[9px] pl-2.5">
        <div className="flex h-[55px] items-center pr-1 pb-3 pl-[3px] text-black">
          <ObjectIcon className="text-[#444]" />
          <span className="ml-2.5 flex-1">平面</span>
          <button type="button" aria-label="固定"><PinIcon className="text-[#777]" /></button>
        </div>
        <div className="flex h-[25px] overflow-hidden rounded border border-[#4a4a4a] bg-[#232323] text-[#e6e6e6]">
          <button type="button" aria-label="浏览物体" className="flex w-[39px] items-center justify-center gap-1 border-r border-[#4a4a4a] bg-[#3b3b3b] text-[#aaa]"><ObjectIcon fill="#dedede" /><Chevron /></button>
          <input aria-label="名称" defaultValue="平面" className="flex-1 bg-transparent pl-2" />
        </div>
        <div className="mt-3 rounded-[5px] bg-[#cbcbcb]">
          <div className="flex h-[33px] items-center gap-2 px-2.5">
            <Svg size="size-2.5" box="0 0 10 10" className="text-[#444]"><path d="M0 2.500 5 8l5-5.500" /></Svg>
            <span className="flex-1 text-[15px]">变换</span>
            <Grip />
          </div>
          <div className="flex flex-col gap-1.5 pt-[7px]">
            <Vector name="位置" values={['1.52 m', '0.14601 m', '-0.38832 m']} lock />
            <Vector name="旋转" values={['0°', '0°', '0°']} lock />
            <Row label="模式" lock={false}>
              <div className="relative">
                <select aria-label="模式" className="h-[25px] w-full appearance-none rounded bg-[#3b3b3b] pl-2.5 text-[#dedede]">
                  <option>XYZ 欧拉</option>
                </select>
                <span className="pointer-events-none absolute top-2 right-1"><Chevron /></span>
              </div>
            </Row>
            <Vector name="缩放" values={['1.000', '1.000', '1.000']} lock />
          </div>
          <div className="flex h-[41px] items-center gap-2 pt-3 pl-[27px]">
            <Svg size="size-2.5" box="0 0 10 10" className="text-[#444]"><path d="M0 2.500 5 8l5-5.500" /></Svg>
            变换增量
          </div>
          <div className="flex flex-col gap-0.5 rounded-b-[5px] bg-[#bfbfbf] pt-[9px] pb-3">
            <Vector name="位置" values={['0 m', '0 m', '0 m']} round />
            <Vector name="旋转" values={['0°', '0°', '0°']} round />
            <Vector name="缩放" values={['1.000', '1.000', '1.000']} round />
          </div>
        </div>
        {PANELS.map((p) => (
          <button key={p} type="button" className="mt-0.5 flex h-[31px] w-full items-center gap-2 rounded-[5px] bg-[#cbcbcb] px-2.5 text-left text-[15px]">
            <Svg size="size-2.5" box="0 0 10 10" className="text-[#444]"><path d="M3.500 0 9 5l-5.500 5" /></Svg>
            <span className="flex-1">{p}</span>
            <Grip />
          </button>
        ))}
      </div>
    </div>
  </section>
);

/* ---------- status bar ---------- */

const Mouse = ({ d }) => (
  <Svg size="h-5 w-4" box="0 0 16 20">
    <rect x="1" y="1" width="14" height="18" rx="4" strokeWidth="1.400" />
    <path d={d} fill="#111" stroke="none" />
  </Svg>
);

const StatusBar = () => (
  <footer className="flex h-6 shrink-0 items-center bg-[#b3b3b3] pr-4 pl-3.5">
    {[
      ['选择', 'M1 10V4a3 3 0 0 1 3-3h3v9z'],
      ['旋转视图', 'M5.500 3h5v8h-5z'],
      ['调用菜单', 'M9 1h3a3 3 0 0 1 3 3v6H9z'],
    ].map(([t, d]) => (
      <span key={t} className="flex w-[281px] items-center gap-1.5"><Mouse d={d} />{t}</span>
    ))}
    <Svg className="mr-2 ml-auto"><circle cx="10" cy="10" r="7.500" stroke="#555" /><ellipse cx="10" cy="10" rx="3.500" ry="7.500" stroke="#555" /><path d="M2.500 10h15" stroke="#555" /><path d="M2 2l16 17" stroke="#111" strokeWidth="2" /></Svg>
    <span className="border-l border-[#222] pl-2 leading-4">4.2.0</span>
  </footer>
);

const App = () => (
  <div className="relative flex h-screen flex-col overflow-hidden bg-[#1d1d1d] font-[Inter,'Noto_Sans_CJK_SC',sans-serif] text-sm text-[#1c1c1c]">
    <TitleBar />
    <MenuBar />
    <main className="flex min-h-0 flex-1 gap-[3px] px-px pt-0.5 pb-0.5">
      <div className="flex min-w-0 flex-1 flex-col gap-[3px]">
        <Viewport />
        <Timeline />
      </div>
      <div className="flex w-[442px] shrink-0 flex-col gap-[3px]">
        <Outliner />
        <Properties />
      </div>
    </main>
    <StatusBar />
    <div className="pointer-events-none absolute right-0.5 bottom-3.5 font-['Liberation_Sans','Noto_Sans_CJK_SC',sans-serif] text-[49px] leading-[60px] text-white/60 [text-shadow:1px_1px_1px_rgba(80,80,80,0.6)]">CSDN @llkk星期五</div>
  </div>
);

export default App;
